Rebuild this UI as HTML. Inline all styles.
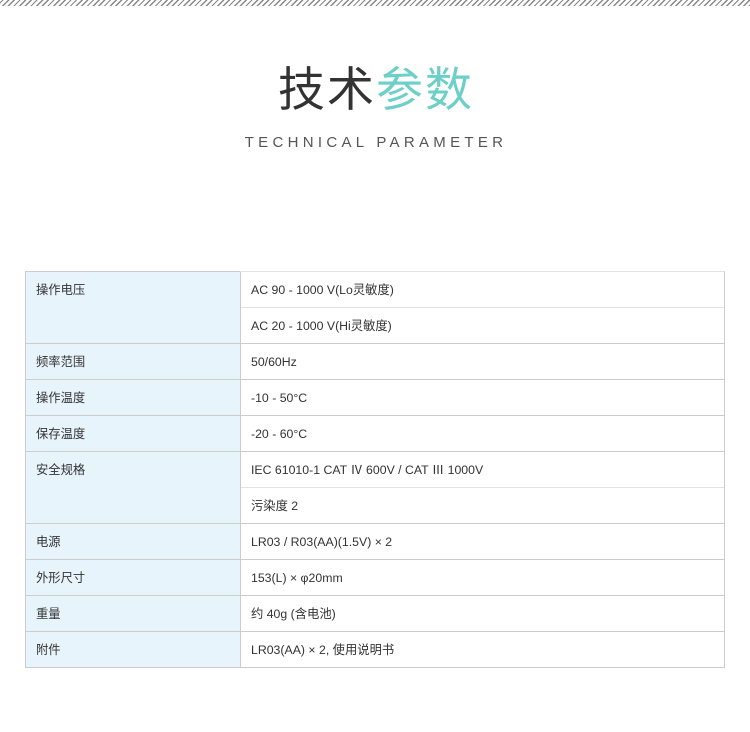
<!DOCTYPE html>
<html><head><meta charset="utf-8"><style>
*{margin:0;padding:0;box-sizing:border-box}
body{width:750px;height:732px;background:#fff;position:relative;overflow:hidden;font-family:"Liberation Sans","Noto Sans CJK SC",sans-serif;color:#333}
.hatch{position:absolute;left:0;top:0;width:750px;height:6px;background:repeating-linear-gradient(135deg,#fff 0,#fff 1.5px,#888 1.5px,#888 2.8px,#fff 2.8px,#fff 4px)}
.t{position:absolute;top:59px;left:0;width:750px;text-align:center;font-size:47px;line-height:62px;color:#333;letter-spacing:2px;padding-left:2px}
.t span{color:#6dd0c8}
.s{position:absolute;top:134px;left:0;width:750px;text-align:center;font-size:15px;letter-spacing:4.3px;color:#555;padding-left:2px}
.c{position:absolute;font-size:12.3px;line-height:16px;color:#333}
.l{position:absolute;left:25px;width:216px;background:#e8f4fc;border:1px solid #ccc;border-right:1px solid #ccc}
.r{position:absolute;left:240px;width:485px;border:1px solid #ccc;border-left:none}
.h{position:absolute;left:241px;width:483px;height:1px;background:#e3e3e3}
</style></head><body>
<div class="hatch"></div>
<div class="t">技术<span>参数</span></div>
<div class="s">TECHNICAL PARAMETER</div>

<div class="l" style="top:271px;height:397px"></div>
<div class="r" style="top:271px;height:397px;border-top-color:#e3e3e3"></div>
<div style="position:absolute;left:25px;top:343px;width:700px;height:1px;background:#ccc"></div>
<div style="position:absolute;left:25px;top:379px;width:700px;height:1px;background:#ccc"></div>
<div style="position:absolute;left:25px;top:415px;width:700px;height:1px;background:#ccc"></div>
<div style="position:absolute;left:25px;top:451px;width:700px;height:1px;background:#ccc"></div>
<div style="position:absolute;left:25px;top:523px;width:700px;height:1px;background:#ccc"></div>
<div style="position:absolute;left:25px;top:559px;width:700px;height:1px;background:#ccc"></div>
<div style="position:absolute;left:25px;top:595px;width:700px;height:1px;background:#ccc"></div>
<div style="position:absolute;left:25px;top:631px;width:700px;height:1px;background:#ccc"></div>
<div class="h" style="top:307px"></div>
<div class="h" style="top:487px"></div>

<div class="c" style="left:36px;top:282px">操作电压</div>
<div class="c" style="left:251px;top:282px">AC 90 - 1000 V(Lo灵敏度)</div>
<div class="c" style="left:251px;top:318px">AC 20 - 1000 V(Hi灵敏度)</div>
<div class="c" style="left:36px;top:354px">频率范围</div>
<div class="c" style="left:251px;top:354px">50/60Hz</div>
<div class="c" style="left:36px;top:390px">操作温度</div>
<div class="c" style="left:251px;top:390px">-10 - 50°C</div>
<div class="c" style="left:36px;top:426px">保存温度</div>
<div class="c" style="left:251px;top:426px">-20 - 60°C</div>
<div class="c" style="left:36px;top:462px">安全规格</div>
<div class="c" style="left:251px;top:462px">IEC 61010-1 CAT Ⅳ 600V / CAT Ⅲ 1000V</div>
<div class="c" style="left:251px;top:498px">污染度 2</div>
<div class="c" style="left:36px;top:534px">电源</div>
<div class="c" style="left:251px;top:534px">LR03 / R03(AA)(1.5V) × 2</div>
<div class="c" style="left:36px;top:570px">外形尺寸</div>
<div class="c" style="left:251px;top:570px">153(L) × φ20mm</div>
<div class="c" style="left:36px;top:606px">重量</div>
<div class="c" style="left:251px;top:606px">约 40g (含电池)</div>
<div class="c" style="left:36px;top:642px">附件</div>
<div class="c" style="left:251px;top:642px">LR03(AA) × 2, 使用说明书</div>
</body></html>
